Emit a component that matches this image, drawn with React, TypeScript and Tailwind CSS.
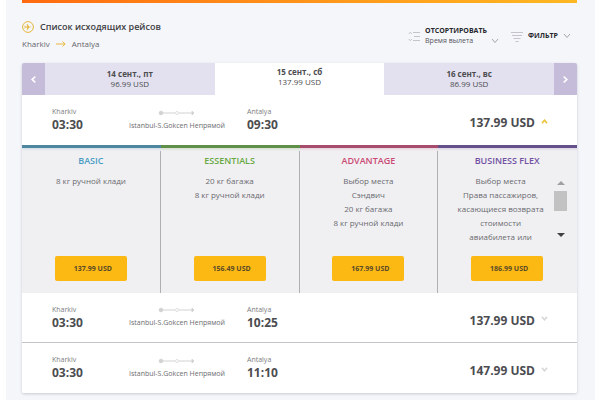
import React from "react";

type Flight = { depart: string; arrive: string; price: string };
type Fare = {
  name: string;
  price: string;
  perks: string[];
  title: string;
  bar: string;
  scroll?: boolean;
};

const fares: Fare[] = [
  { name: "BASIC", price: "137.99 USD", perks: ["8 кг ручной клади"], title: "text-[#4a9cc4]", bar: "border-[#4f86a0] from-[#d3dfe6]" },
  { name: "ESSENTIALS", price: "156.49 USD", perks: ["20 кг багажа", "8 кг ручной клади"], title: "text-[#68a843]", bar: "border-[#5f8f48] from-[#d5e0cf]" },
  { name: "ADVANTAGE", price: "167.99 USD", perks: ["Выбор места", "Сэндвич", "20 кг багажа", "8 кг ручной клади"], title: "text-[#cb4a74]", bar: "border-[#a74c6c] from-[#e6d3da]" },
  { name: "BUSINESS FLEX", price: "186.99 USD", perks: ["Выбор места", "Права пассажиров, касающиеся возврата стоимости", "авиабилета или"], title: "text-[#7350a2]", bar: "border-[#65508a] from-[#dad5e3]", scroll: true },
];

function Chevron({ className, up = false, width = 2 }: { className: string; up?: boolean; width?: number }) {
  return (
    <svg viewBox="0 0 8 6" className={className} fill="none" stroke="currentColor" strokeWidth={width} aria-hidden="true">
      <path d={up ? "M1 5 L4 1.5 L7 5" : "M1 1 L4 4.5 L7 1"} />
    </svg>
  );
}

function Route() {
  return (
    <svg viewBox="0 0 38 6" className="h-[6px] w-[38px] text-[#d2d2d2]" fill="none" stroke="currentColor" aria-hidden="true">
      <path d="M3 3H17M21 3H35" />
      <circle cx="3" cy="3" r="1.8" fill="currentColor" />
      <circle cx="19" cy="3" r="1.5" strokeWidth="0.7" />
      <path d="M34 1.2L36 3L34 4.8Z" fill="currentColor" />
    </svg>
  );
}

function FlightRow({ flight, open = false }: { flight: Flight; open?: boolean }) {
  return (
    <div className="flex h-full items-center bg-white pr-[29px] pl-[30px] text-[#4c4c50]">
      <div className="w-[77px]">
        <p className="text-[7px] leading-[10px] text-[#7c7c80]">Kharkiv</p>
        <p className="text-[12px] leading-[16px] font-bold">{flight.depart}</p>
      </div>
      <div className="flex w-[118px] flex-col items-start gap-[5px]">
        <div className="ml-[29px]"><Route /></div>
        <p className="text-[7px] leading-[10px] whitespace-nowrap text-[#6c6c70]">Istanbul-S.Gokcen Непрямой</p>
      </div>
      <div>
        <p className="text-[7px] leading-[10px] text-[#7c7c80]">Antalya</p>
        <p className="text-[12px] leading-[16px] font-bold">{flight.arrive}</p>
      </div>
      <button type="button" aria-expanded={open} className="ml-auto flex items-center gap-[6px] pt-[6px] text-[12px] leading-[16px] font-bold">
        {flight.price}
        <Chevron up={open} className={open ? "mb-1 h-[5px] w-[7px] text-[#efc440]" : "mb-1 h-[5px] w-[7px] text-[#d8d8dc]"} />
      </button>
    </div>
  );
}

function FareColumn({ fare }: { fare: Fare }) {
  return (
    <section className="group flex flex-col">
      <div className={`h-[6px] border-t-[3px] bg-linear-to-b to-[#f0f0f3] ${fare.bar}`} />
      <div className="flex flex-1 flex-col items-center border-r border-[#b0b0b4] pb-[12px] group-last:border-transparent">
        <h2 className={`mt-[3px] text-[9px] leading-[14px] font-semibold ${fare.title}`}>{fare.name}</h2>
        <div className="mt-[6px] flex h-[70px] w-full justify-center px-[9px]">
          <ul className={`h-full flex-1 overflow-hidden text-center text-[8px] leading-[14px] text-[#6a6a6e] ${fare.scroll ? "px-1" : ""}`}>
            {fare.perks.map((p) => (
              <li key={p}>{p}</li>
            ))}
          </ul>
          {fare.scroll && (
            <div className="flex w-[13px] flex-col items-center pt-[7px] pb-[7px]" aria-hidden="true">
              <div className="h-0 w-0 border-x-4 border-b-4 border-x-transparent border-b-[#a0a0a0]" />
              <div className="mt-[6px] h-[20px] w-full bg-[#c2c2c2]" />
              <div className="mt-auto h-0 w-0 border-x-4 border-t-4 border-x-transparent border-t-[#404040]" />
            </div>
          )}
        </div>
        <button type="button" className="mt-auto h-[25px] w-[72px] rounded-xs bg-[#fdb913] pl-1 text-[7px] leading-[10px] font-bold text-[#5a4a28]">
          {fare.price}
        </button>
      </div>
    </section>
  );
}

function DateTab({ date, price, active = false }: { date: string; price: string; active?: boolean }) {
  return (
    <button
      type="button"
      role="tab"
      aria-selected={active}
      className={`flex flex-1 flex-col items-center justify-center text-[8px] leading-[10px] text-[#4c4c50] ${active ? "bg-white pb-1" : "bg-[#e3e1ef]"}`}
    >
      <span className="font-bold">{date}</span>
      <span>{price}</span>
    </button>
  );
}

export default function App() {
  return (
    <div className="min-h-screen bg-white px-[6px] font-['Open_Sans','Noto_Sans',sans-serif]">
      <main className="min-h-screen bg-[#f5f6fa] pr-[18px] pl-[16px]">
        <div className="h-[3px] bg-linear-to-r from-[#ff6a10] to-[#fdb822]" />
        <header className="flex h-[60px] items-start justify-between pr-[6px]">
          <div className="pt-[17px]">
            <h1 className="flex items-center gap-[6px] text-[9px] leading-[14px] font-semibold text-[#3e3e44]">
              <svg viewBox="0 0 12 12" className="h-3 w-3 text-[#e6b63a]" fill="none" stroke="currentColor" aria-hidden="true">
                <circle cx="6" cy="6" r="5.4" />
                <path d="M9.6 6L7.2 5.4L5.3 2.9H4.6L5.4 5.4H3.6L2.8 4.5H2.4L2.8 6L2.4 7.5H2.8L3.6 6.6H5.4L4.6 9.1H5.3L7.2 6.6Z" fill="currentColor" stroke="none" />
              </svg>
              Список исходящих рейсов
            </h1>
            <p className="mt-[3px] flex items-center gap-[6px] text-[8px] leading-[14px] text-[#66666c]">
              Kharkiv
              <svg viewBox="0 0 10 6" className="h-[6px] w-[10px] text-[#e8b93c]" fill="none" stroke="currentColor" aria-hidden="true">
                <path d="M0 3H9M6.5 0.5L9.2 3L6.5 5.5" />
              </svg>
              Antalya
            </p>
          </div>
          <div className="flex pt-[22px]">
            <svg viewBox="0 0 13 11" className="mt-[6px] h-[11px] w-[13px] text-[#c4c4ca]" fill="none" stroke="currentColor" aria-hidden="true">
              <path d="M5 1.5H12M6 5.5H12M5 9.5H12M0.8 3L2.3 1.2L3.8 3M0.8 8L2.3 9.8L3.8 8" />
            </svg>
            <div className="ml-1 flex w-[74px] flex-col">
              <label htmlFor="sort" className="text-[7px] leading-[11px] font-bold whitespace-nowrap text-[#26262c]">ОТСОРТИРОВАТЬ</label>
              <div className="flex h-[10px] items-center">
                <select id="sort" className="h-[10px] flex-1 appearance-none bg-transparent text-[7px] leading-[10px] text-[#55555c]">
                  <option>Время вылета</option>
                </select>
                <Chevron width={1} className="h-[6px] w-[8px] text-[#a4a4aa]" />
              </div>
            </div>
            <button type="button" className="ml-3 flex h-[18px] items-center pt-1 text-[7px] leading-[10px] font-bold text-[#26262c]">
              <svg viewBox="0 0 12 11" className="mr-[5px] h-[11px] w-3 text-[#c4c4ca]" fill="none" stroke="currentColor" aria-hidden="true">
                <path d="M0 1.5H12M1 4.5H11M2.5 7.5H9.5M4.5 10.5H7.5" />
              </svg>
              ФИЛЬТР
              <Chevron width={1} className="ml-[5px] h-[6px] w-[8px] text-[#a4a4aa]" />
            </button>
          </div>
        </header>

        <div className="overflow-hidden rounded-xs shadow-[0_1px_3px_#c8c8d4]">
          <div className="flex h-[32px]" role="tablist">
            <button type="button" aria-label="Предыдущие даты" className="flex w-[23px] items-center justify-center bg-[#c5bcda] text-white">
              <svg viewBox="0 0 5 7" className="h-[7px] w-[5px]" fill="none" stroke="currentColor" strokeWidth="1.6"><path d="M4.3 0.7L1.2 3.5L4.3 6.3" /></svg>
            </button>
            <DateTab date="14 сент., пт" price="96.99 USD" />
            <DateTab date="15 сент., сб" price="137.99 USD" active />
            <DateTab date="16 сент., вс" price="86.99 USD" />
            <button type="button" aria-label="Следующие даты" className="flex w-[23px] items-center justify-center bg-[#c5bcda] text-white">
              <svg viewBox="0 0 5 7" className="h-[7px] w-[5px]" fill="none" stroke="currentColor" strokeWidth="1.6"><path d="M0.7 0.7L3.8 3.5L0.7 6.3" /></svg>
            </button>
          </div>
          <div className="h-[50px]">
            <FlightRow flight={{ depart: "03:30", arrive: "09:30", price: "137.99 USD" }} open />
          </div>
          <div className="grid h-[148px] grid-cols-4 bg-[#f0f0f3]">
            {fares.map((f) => (
              <FareColumn key={f.name} fare={f} />
            ))}
          </div>
          <div className="h-[50px] border-b border-[#c4c4c8]">
            <FlightRow flight={{ depart: "03:30", arrive: "10:25", price: "137.99 USD" }} />
          </div>
          <div className="h-[50px]">
            <FlightRow flight={{ depart: "03:30", arrive: "11:10", price: "147.99 USD" }} />
          </div>
        </div>
      </main>
    </div>
  );
}
